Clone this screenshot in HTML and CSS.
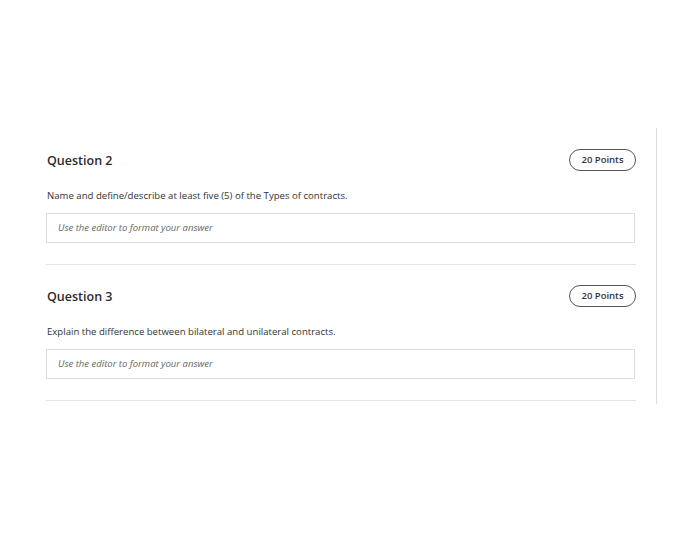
FILE: index.html
```html
<!DOCTYPE html>
<html lang="en">
<head>
    <meta charset="UTF-8">
    <meta name="viewport" content="width=device-width, initial-scale=1.0">
    <title>Quiz</title>
    <link rel="stylesheet" href="styles.css">
</head>
<body>
    <div class="panel">
        <div class="question">
            <div class="question-header">
                <h2 class="question-title">Question 2</h2>
                <span class="points">20 Points</span>
            </div>
            <p class="question-text">Name and define/describe at least five (5) of the Types of contracts.</p>
            <div class="answer-box">Use the editor to format your answer</div>
        </div>
        <div class="question">
            <div class="question-header">
                <h2 class="question-title">Question 3</h2>
                <span class="points">20 Points</span>
            </div>
            <p class="question-text">Explain the difference between bilateral and unilateral contracts.</p>
            <div class="answer-box">Use the editor to format your answer</div>
        </div>
    </div>
</body>
</html>
```

FILE: styles.css
```css
body {
    margin: 0;
    background-color: #ffffff;
    font-family: 'Open Sans', 'Noto Sans', sans-serif;
    color: #333333;
}

.panel {
    margin-top: 128px;
    width: 590px;
    padding: 0 20px 3px 46px;
    border-right: 1px solid #dcdcdc;
}

.question {
    padding-top: 21px;
    padding-bottom: 21px;
    border-bottom: 1px solid #e3e3e3;
}

.question + .question {
    padding-top: 20px;
}

.question-header {
    display: flex;
    justify-content: space-between;
    align-items: center;
    height: 22px;
}

.question-title {
    margin: 0 0 0 1px;
    font-size: 12.5px;
    font-weight: 600;
    color: #2b2b2b;
}

.points {
    box-sizing: border-box;
    width: 67px;
    height: 22px;
    border: 1px solid #555555;
    border-radius: 11px;
    font-size: 9.5px;
    font-weight: 600;
    line-height: 20px;
    text-align: center;
    color: #333333;
}

.question-text {
    margin: 18px 0 0 1px;
    font-size: 9.6px;
    line-height: 14px;
    color: #333333;
}

.answer-box {
    box-sizing: border-box;
    margin-top: 10px;
    width: 589px;
    height: 30px;
    padding: 0 11px;
    border: 1px solid #dddddd;
    font-size: 9.5px;
    font-style: italic;
    line-height: 28px;
    color: #666666;
}
```
